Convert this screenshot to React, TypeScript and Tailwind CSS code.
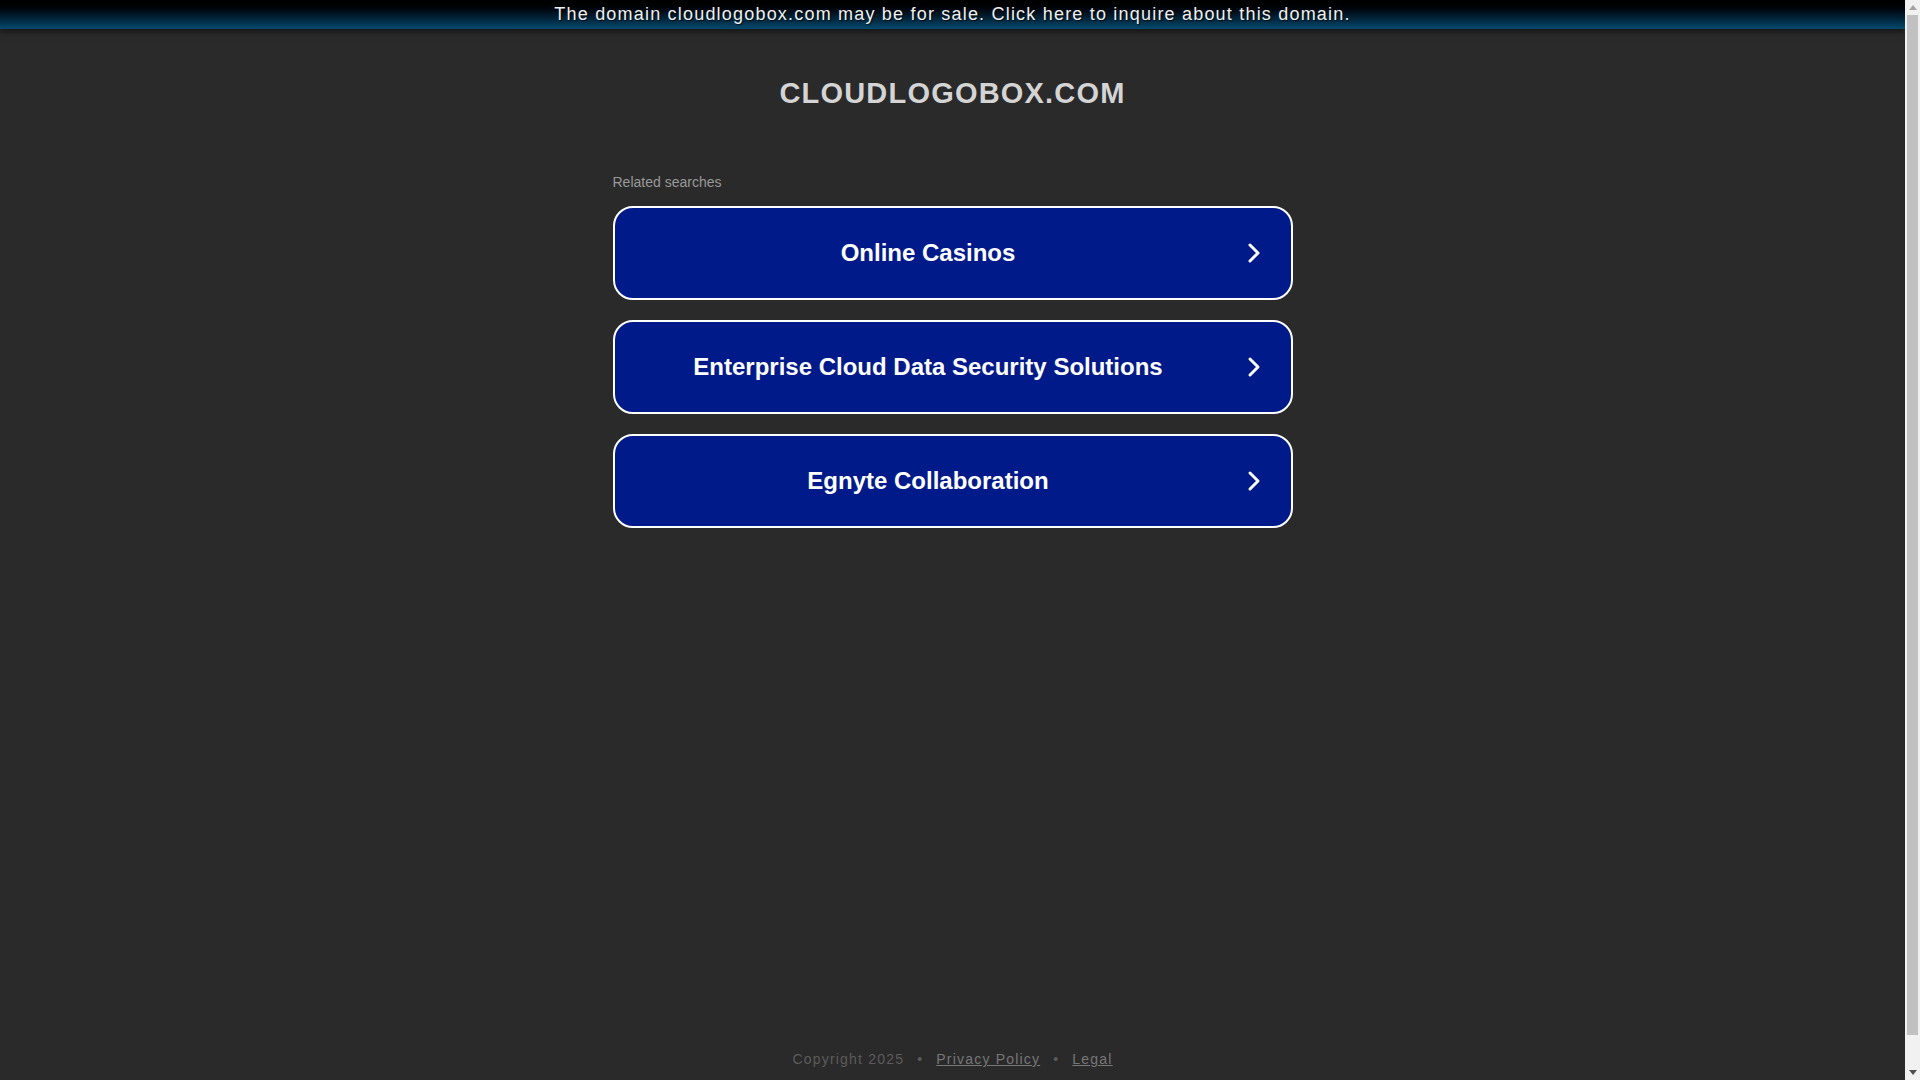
const searches = [
  "Online Casinos",
  "Enterprise Cloud Data Security Solutions",
  "Egnyte Collaboration",
];

function Chevron() {
  return (
    <svg width="14" height="22" viewBox="0 0 14 22" fill="none">
      <path d="M3 3 L11 11 L3 19" stroke="white" strokeWidth="3" strokeLinecap="round" strokeLinejoin="round" />
    </svg>
  );
}

function Scrollbar() {
  return (
    <div className="w-[15px] h-full bg-[#f1f1f1] flex flex-col">
      <div className="h-[15px] flex items-center justify-center">
        <svg width="8" height="5" viewBox="0 0 8 5">
          <polygon points="0,5 4,0 8,5" fill="#a3a3a3" />
        </svg>
      </div>
      <div className="h-[1020px] mx-[2px] bg-[#c1c1c1]" />
      <div className="flex-1" />
      <div className="h-[15px] flex items-center justify-center">
        <svg width="8" height="5" viewBox="0 0 8 5">
          <polygon points="0,0 8,0 4,5" fill="#505050" />
        </svg>
      </div>
    </div>
  );
}

export default function App() {
  return (
    <div
      className="h-screen flex bg-[#2a2a2a] overflow-hidden"
      style={{ fontFamily: '"Liberation Sans", Arial, sans-serif' }}
    >
      <div className="flex-1 flex flex-col">
        <div className="h-[29px] flex items-center justify-center pb-[2px] bg-gradient-to-b from-[#000000] to-[#054a70] shadow-[0_3px_6px_rgba(0,0,0,0.5)]">
          <a className="text-[18px] leading-[20px] tracking-[1.2px] text-[#f0f0f0] cursor-pointer [text-shadow:1px_1px_1px_rgba(0,0,0,0.7)]">
            The domain cloudlogobox.com may be for sale. Click here to inquire about this domain.
          </a>
        </div>

        <h1 className="mt-[48px] text-center text-[29px] leading-[33px] font-bold tracking-[1.2px] text-[#d4d4d4]">
          CLOUDLOGOBOX.COM
        </h1>

        <div className="w-[680px] mx-auto mt-[64px]">
          <p className="text-[14px] leading-[16px] text-[#999999]">Related searches</p>
          <div className="mt-[16px] flex flex-col gap-[20px]">
            {searches.map((s) => (
              <a
                key={s}
                className="h-[94px] flex items-center rounded-[20px] border-2 border-white bg-[#011a8a] pr-[25px] cursor-pointer"
              >
                <span className="flex-1 text-center text-[24px] font-bold text-white">{s}</span>
                <span className="w-[24px] flex justify-center">
                  <Chevron />
                </span>
              </a>
            ))}
          </div>
        </div>

        <div className="mt-auto pb-[13px] flex justify-center items-center text-[14px] leading-[16px] tracking-[1.2px]">
          <span className="text-[#5c5c5c]">Copyright 2025</span>
          <span className="text-[#5c5c5c] mx-[13px]">•</span>
          <a className="text-[#777777] underline cursor-pointer">Privacy Policy</a>
          <span className="text-[#5c5c5c] mx-[13px]">•</span>
          <a className="text-[#777777] underline cursor-pointer">Legal</a>
        </div>
      </div>
      <Scrollbar />
    </div>
  );
}
